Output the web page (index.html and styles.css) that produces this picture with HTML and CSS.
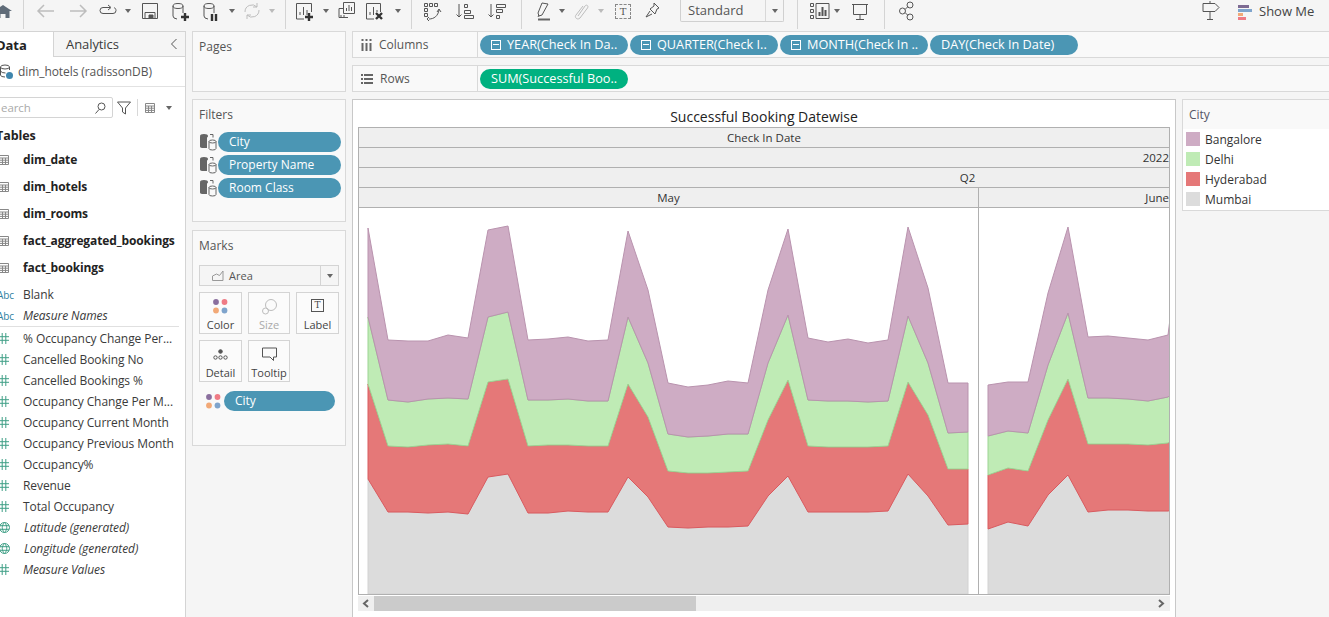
FILE: index.html
```html
<!DOCTYPE html>
<html lang="en">
<head>
    <meta charset="UTF-8">
    <meta name="viewport" content="width=device-width, initial-scale=1.0">
    <link rel="stylesheet" href="styles.css">
    <title>Successful Booking Datewise</title>
</head>
<body>

    <svg class="defs" width="0" height="0">
        <symbol id="tableIcon" viewBox="0 0 10 10">
            <path d="M.5.5h9v9h-9zM.5 3h9M.5 5.2h9M.5 7.4h9M3.5 3v6.5M6.5 3v6.5" fill="none" stroke="#888"/>
        </symbol>
        <symbol id="hashIcon" viewBox="0 0 10 11">
            <path d="M3.2 0v11M6.8 0v11M0 3.700h10M0 7.300h10" fill="none" stroke="#3f9f86"/>
        </symbol>
        <symbol id="globeIcon" viewBox="0 0 11 11">
            <path d="M5.500.5a5 5 0 1 0 0 10a5 5 0 1 0 0-10M5.500.5c-3 3-3 7 0 10c3-3 3-7 0-10M1 3.700h9M1 7.300h9" fill="none" stroke="#3f9f86"/>
        </symbol>
        <symbol id="shelfDsIcon" viewBox="0 0 18 18">
            <path d="M1 3.500v10q0 1.500 4 1.500h3V3.500z" fill="#666"/>
            <ellipse cx="5" cy="3" rx="4" ry="2" fill="#666"/>
            <path d="M10 8.500v7q0 1.500 3.500 1.500t3.500-1.500v-7M10 8.500q0-1.500 3.500-1.500t3.500 1.500q0 1.500-3.500 1.500t-3.500-1.500M11 1.500h3v3" fill="none" stroke="#666"/>
        </symbol>
        <symbol id="colorDots" viewBox="0 0 15 15">
            <circle cx="3" cy="3" r="2.900" fill="#8a6f9e"/>
            <circle cx="11.500" cy="3" r="2.900" fill="#ef7b85"/>
            <circle cx="3" cy="11.500" r="2.900" fill="#f2a977"/>
            <circle cx="11.500" cy="11.500" r="2.900" fill="#7fa4cc"/>
        </symbol>
    </svg>

    <header class="toolbar">
        <svg class="ic" width="22" height="22" viewBox="0 0 22 22"><path d="M11 5l9 6h-2.500v7h-4v-4h-5v4h-4v-7H2z" fill="#5f6b78" stroke="none"/></svg>
        <i class="sep"></i>
        <svg class="ic off" width="18" height="22" viewBox="0 0 18 22"><path d="M1 11h16M7 5l-6 6 6 6" stroke-width="1.500"/></svg>
        <svg class="ic off" width="18" height="22" viewBox="0 0 18 22"><path d="M1 11h16M11 5l6 6-6 6" stroke-width="1.500"/></svg>
        <svg class="ic" width="20" height="22" viewBox="0 0 20 22"><path d="M12 7.500H5a3 3 0 0 0 0 6h10a3 3 0 0 0 3-3c0-1.500-1-2.500-2-3M10 5l3 2.500-3 2.500"/></svg>
        <i class="caret"></i>
        <svg class="ic" width="18" height="22" viewBox="0 0 18 22"><path d="M1.500 3.500h15v15h-15zM4 18.500v-6h10v6"/><path d="M8 15h4v3.500H8z" fill="#555"/></svg>
        <svg class="ic" width="20" height="22" viewBox="0 0 20 22"><ellipse cx="7" cy="6" rx="5" ry="2.500"/><path d="M2 6v10q0 2.500 4 3M12 6v7"/><path class="heavy" d="M14 13v8M10 17h8"/></svg>
        <svg class="ic" width="20" height="22" viewBox="0 0 20 22"><ellipse cx="7" cy="6" rx="5" ry="2.500"/><path d="M2 6v10q0 2.500 4 3M12 6v7"/><path class="heavy" d="M10 14v7M14 14v7"/></svg>
        <i class="caret"></i>
        <svg class="ic off" width="18" height="22" viewBox="0 0 18 22"><path d="M2 12a7 7 0 0 1 12-5M16 10a7 7 0 0 1-12 5M14 3v4h-4M4 19v-4h4"/></svg>
        <i class="caret off"></i>
        <i class="sep"></i>
        <svg class="ic" width="20" height="22" viewBox="0 0 20 22"><path d="M9 19H1.500V3.500h15V12M5 15v-3M8.500 15V7M12 15v-5" /><path class="heavy" d="M14 13v8M10 17h8"/></svg>
        <i class="caret"></i>
        <svg class="ic" width="18" height="22" viewBox="0 0 18 22"><path d="M1 8.500h5M1 8.500v9h9M5.500 2.500h11v11h-11zM8.500 11V8M11 11V5M13.500 11V7M3 17v-2M6 17v-2"/></svg>
        <svg class="ic" width="20" height="22" viewBox="0 0 20 22"><path d="M9 19H1.500V3.500h14V12M5 15v-3M8.500 15V7M12 12v-2"/><path class="heavy" d="M11 13l6 6M17 13l-6 6"/></svg>
        <i class="caret"></i>
        <i class="sep"></i>
        <svg class="ic" width="18" height="22" viewBox="0 0 18 22"><path d="M1.500 3.500h3v3h-3zM6.500 3.500h3v3h-3zM11.500 3.500h3v3h-3zM1.500 8.500h3v3h-3zM1.500 13.500h3v3h-3zM6 19c5 0 9-3 10-9M14 12l2-3 2 3M6 17l-2 2 2 2"/></svg>
        <svg class="ic" width="18" height="22" viewBox="0 0 18 22"><path d="M3 4v13M.5 14.500L3 17l2.500-2.500M8.500 4.500h3v3h-3zM8.500 10.500h6v3h-6zM8.500 15.500h9v3h-9z"/></svg>
        <svg class="ic" width="18" height="22" viewBox="0 0 18 22"><path d="M3 4v13M.5 14.500L3 17l2.500-2.500M8.500 4.500h9v3h-9zM8.500 9.500h6v3h-6zM8.500 15.500h3v3h-3z"/></svg>
        <i class="sep"></i>
        <svg class="ic" width="14" height="22" viewBox="0 0 14 22"><path d="M5 3L1 13l1 3 3-1 6-11zM2 15l-1 2"/><path d="M1 19.500h12" stroke="#666" stroke-width="2"/></svg>
        <i class="caret"></i>
        <svg class="ic off" width="14" height="22" viewBox="0 0 14 22"><path d="M4 16l7-10c1.500-2 4 0 2.500 2L6 18c-2.500 2.500-6-.5-4-3l7-9"/></svg>
        <i class="caret off"></i>
        <span class="tbox">T</span>
        <svg class="ic" width="16" height="22" viewBox="0 0 16 22"><path d="M9 3l5 5-2 1-2 5-5-5 4-3zM5 11l-4 6 6-3"/></svg>
        <div class="select">
            <span class="select-text">Standard</span>
            <span class="select-arrow"><i class="caret"></i></span>
        </div>
        <i class="sep"></i>
        <svg class="ic" width="20" height="22" viewBox="0 0 20 22"><path d="M.5 3.500h3v3h-3zM.5 9.500h3v3h-3zM.5 15.500h3v3h-3zM6 3.500h13v15H6z"/><path class="mid" d="M9.500 16v-4M12.500 16V7M15.500 16v-6"/></svg>
        <i class="caret"></i>
        <svg class="ic" width="16" height="22" viewBox="0 0 16 22"><path d="M0 4.500h16M1.500 4.500v10h13v-10M8 14.500v5M4 19.500h8"/></svg>
        <i class="sep"></i>
        <svg class="ic" width="15" height="22" viewBox="0 0 15 22"><circle cx="3.500" cy="11" r="3"/><circle cx="11" cy="5" r="3"/><circle cx="11" cy="17" r="3"/><path d="M6 9.500l3-3M6 12.500l3 3"/></svg>
        <span></span>
        <svg class="ic" width="18" height="22" viewBox="0 0 18 22"><path d="M1 3.500h12l4 4-4 4H1zM8 3.500V1M8 11.500V19M5 19.500h6"/></svg>
        <div class="show-me">
            <svg width="14" height="18" viewBox="0 0 14 18"><path d="M0 3h11v3H0z" fill="#7d6a92"/><path d="M0 7h14v3H0z" fill="#7fa4cc"/><path d="M0 11h5v3H0z" fill="#f2a977"/><path d="M0 15h8v3H0z" fill="#ef7b85"/></svg>
            <span>Show Me</span>
        </div>
    </header>

    <div class="workspace">
        <aside class="data-pane">
            <div class="tabs">
                <div class="tab tab-active"><span>Data</span></div>
                <div class="tab tab-other">
                    <span>Analytics</span>
                    <svg class="ic" width="8" height="12" viewBox="0 0 8 12"><path d="M6.500 1L1.500 6l5 5"/></svg>
                </div>
            </div>
            <div class="source">
                <svg class="ic thin" width="14" height="16" viewBox="0 0 14 16"><ellipse cx="5" cy="3" rx="4.500" ry="2"/><path d="M.5 3v8q0 2 4.500 2M9.500 3v3M.5 7q1 2 5 2"/><circle cx="9.500" cy="11.500" r="3.500" fill="#3f86ad" stroke="none"/></svg>
                <span>dim_hotels (radissonDB)</span>
            </div>
            <div class="search-row">
                <div class="search">
                    <span class="search-text">earch</span>
                    <svg class="ic" width="11" height="12" viewBox="0 0 11 12"><circle cx="6.500" cy="4.500" r="3.500"/><path d="M4 7.500l-3.500 4"/></svg>
                </div>
                <svg class="ic" width="14" height="14" viewBox="0 0 14 14"><path d="M.5 1h13L8.500 7v6l-3-2V7z"/></svg>
                <i class="search-sep"></i>
                <svg class="view-icon" width="12" height="10"><use href="#tableIcon"/></svg>
                <i class="caret"></i>
            </div>
            <h3 class="tables-title">Tables</h3>
            <ul class="field-list tables">
                <li><svg width="10" height="10"><use href="#tableIcon"/></svg><span>dim_date</span></li>
                <li><svg width="10" height="10"><use href="#tableIcon"/></svg><span>dim_hotels</span></li>
                <li><svg width="10" height="10"><use href="#tableIcon"/></svg><span>dim_rooms</span></li>
                <li><svg width="10" height="10"><use href="#tableIcon"/></svg><span>fact_aggregated_bookings</span></li>
                <li><svg width="10" height="10"><use href="#tableIcon"/></svg><span>fact_bookings</span></li>
            </ul>
            <ul class="field-list dimensions">
                <li><b class="abc">Abc</b><span>Blank</span></li>
                <li><b class="abc">Abc</b><span class="gen">Measure Names</span></li>
            </ul>
            <ul class="field-list measures">
                <li><svg width="10" height="11"><use href="#hashIcon"/></svg><span>% Occupancy Change Per...</span></li>
                <li><svg width="10" height="11"><use href="#hashIcon"/></svg><span>Cancelled Booking No</span></li>
                <li><svg width="10" height="11"><use href="#hashIcon"/></svg><span>Cancelled Bookings %</span></li>
                <li><svg width="10" height="11"><use href="#hashIcon"/></svg><span>Occupancy Change Per M...</span></li>
                <li><svg width="10" height="11"><use href="#hashIcon"/></svg><span>Occupancy Current Month</span></li>
                <li><svg width="10" height="11"><use href="#hashIcon"/></svg><span>Occupancy Previous Month</span></li>
                <li><svg width="10" height="11"><use href="#hashIcon"/></svg><span>Occupancy%</span></li>
                <li><svg width="10" height="11"><use href="#hashIcon"/></svg><span>Revenue</span></li>
                <li><svg width="10" height="11"><use href="#hashIcon"/></svg><span>Total Occupancy</span></li>
                <li><svg width="11" height="11"><use href="#globeIcon"/></svg><span class="gen">Latitude (generated)</span></li>
                <li><svg width="11" height="11"><use href="#globeIcon"/></svg><span class="gen">Longitude (generated)</span></li>
                <li><svg width="10" height="11"><use href="#hashIcon"/></svg><span class="gen">Measure Values</span></li>
            </ul>
        </aside>

        <section class="cards">
            <div class="card card-pages"><h4>Pages</h4></div>
            <div class="card card-filters">
                <h4>Filters</h4>
                <div class="filter"><svg width="18" height="18"><use href="#shelfDsIcon"/></svg><span class="pill">City</span></div>
                <div class="filter"><svg width="18" height="18"><use href="#shelfDsIcon"/></svg><span class="pill">Property Name</span></div>
                <div class="filter"><svg width="18" height="18"><use href="#shelfDsIcon"/></svg><span class="pill">Room Class</span></div>
            </div>
            <div class="card card-marks">
                <h4>Marks</h4>
                <div class="marks-type">
                    <span class="marks-name">
                        <svg class="ic light" width="12" height="11" viewBox="0 0 12 11"><path d="M.5 10.500V6l4-2 3 1.500L11 1v9.500z"/></svg>
                        Area
                    </span>
                    <span class="marks-arrow"><i class="caret"></i></span>
                </div>
                <div class="marks-grid">
                    <div class="mark-btn">
                        <svg width="15" height="15"><use href="#colorDots"/></svg>
                        <span>Color</span>
                    </div>
                    <div class="mark-btn mark-off">
                        <svg class="ic off" width="15" height="15" viewBox="0 0 15 15"><circle cx="9" cy="6" r="5.500"/><circle cx="3.500" cy="12" r="3"/></svg>
                        <span>Size</span>
                    </div>
                    <div class="mark-btn">
                        <span class="label-t">T</span>
                        <span>Label</span>
                    </div>
                    <div class="mark-btn">
                        <svg class="ic thin" width="15" height="15" viewBox="0 0 15 15"><circle cx="7.500" cy="4.500" r="1.800" fill="#555"/><circle cx="2.500" cy="10.500" r="1.700"/><circle cx="7.500" cy="10.500" r="1.700"/><circle cx="12.500" cy="10.500" r="1.700"/></svg>
                        <span>Detail</span>
                    </div>
                    <div class="mark-btn">
                        <svg class="ic" width="15" height="15" viewBox="0 0 15 15"><path d="M.5 1h14v9h-3v3.500L8 10H.5z"/></svg>
                        <span>Tooltip</span>
                    </div>
                </div>
                <div class="marks-field">
                    <svg width="15" height="15"><use href="#colorDots"/></svg>
                    <span class="pill">City</span>
                </div>
            </div>
        </section>

        <main class="main">
            <div class="shelf">
                <div class="shelf-label">
                    <svg class="ic heavyline" width="11" height="12" viewBox="0 0 11 12"><path d="M1.500 4v8M5.500 4v8M9.500 4v8M1.500 0v2M5.500 0v2M9.500 0v2"/></svg>
                    <span>Columns</span>
                </div>
                <div class="shelf-pills">
                    <span class="pill pill-wide"><i class="minus"></i>YEAR(Check In Da..</span>
                    <span class="pill pill-wide"><i class="minus"></i>QUARTER(Check I..</span>
                    <span class="pill pill-wide"><i class="minus"></i>MONTH(Check In ..</span>
                    <span class="pill pill-wide">DAY(Check In Date)</span>
                </div>
            </div>
            <div class="shelf">
                <div class="shelf-label">
                    <svg class="ic heavyline" width="12" height="10" viewBox="0 0 12 10"><path d="M0 1h2M3 1h9M0 5h2M3 5h9M0 9h2M3 9h9"/></svg>
                    <span>Rows</span>
                </div>
                <div class="shelf-pills">
                    <span class="pill pill-wide pill-green">SUM(Successful Boo..</span>
                </div>
            </div>

            <div class="view">
                <div class="sheet">
                    <div class="sheet-title">Successful Booking Datewise</div>
                    <div class="crosstab">
                        <div class="head-row head-center">Check In Date</div>
                        <div class="head-row head-right">2022</div>
                        <div class="head-row head-quarter">Q2</div>
                        <div class="head-row head-months">
                            <div class="month-may">May</div>
                            <div class="month-june">June</div>
                        </div>
                        <svg id="areaChart" class="plot" width="810" height="386" viewBox="359 208 810 386"></svg>
                    </div>
                    <div class="scrollbar">
                        <svg class="ic heavyline" width="8" height="9" viewBox="0 0 8 9"><path d="M6 1L2 4.500 6 8"/></svg>
                        <div class="scroll-track"><div class="scroll-thumb"></div></div>
                        <svg class="ic heavyline" width="8" height="9" viewBox="0 0 8 9"><path d="M2 1l4 3.500L2 8"/></svg>
                    </div>
                </div>
                <div class="legend">
                    <div class="legend-title">City</div>
                    <div class="legend-item"><i class="swatch swatch-bangalore"></i>Bangalore</div>
                    <div class="legend-item"><i class="swatch swatch-delhi"></i>Delhi</div>
                    <div class="legend-item"><i class="swatch swatch-hyderabad"></i>Hyderabad</div>
                    <div class="legend-item"><i class="swatch swatch-mumbai"></i>Mumbai</div>
                </div>
            </div>
        </main>
    </div>

    <script src="chart.js"></script>
</body>
</html>
```

FILE: styles.css
```css
* {
    box-sizing: border-box;
}

html, body {
    height: 617px;
    overflow: hidden;
}

body {
    margin: 0;
    background-color: #f5f5f5;
    font-family: "Open Sans", Arial, sans-serif;
    font-size: 12px;
    color: #3a3a3a;
}

.defs {
    position: absolute;
}

i {
    display: block;
}

h3, h4, ul {
    margin: 0;
    padding: 0;
}

/* line icons */
.ic {
    fill: none;
    stroke: #555;
    stroke-width: 1;
    overflow: visible;
}

.ic.off {
    stroke: #bdbdbd;
}

.ic.light {
    stroke: #999;
}

.ic.heavyline {
    stroke: #666;
    stroke-width: 2;
}

.heavy {
    stroke: #333;
    stroke-width: 2.4;
}

.mid {
    stroke-width: 2;
}

.caret {
    width: 0;
    height: 0;
    border-left: 3.5px solid transparent;
    border-right: 3.5px solid transparent;
    border-top: 4px solid #666;
}

.caret.off {
    border-top-color: #bbb;
}

/* toolbar */
.toolbar {
    display: grid;
    grid-template-columns: 22px 18px 28px 36px 24px 16px 28px 34px 28px 12px 28px 12px 14px 26px 16px 26px 30px 16px 10px 32px 34px 30px 18px 28px 8px 30px 10px 34px 26px 118px 26px 20px 14px 32px 16px 28px 1fr 30px 103px;
    grid-template-rows: 22px;
    justify-items: center;
    align-items: center;
    width: 1337px;
    height: 31px;
    margin-left: -8px;
}

.sep {
    width: 1px;
    height: 29px;
    background-color: #d4d4d4;
    align-self: start;
}

.tbox {
    width: 16px;
    height: 15px;
    border: 1px dashed #888;
    font-family: "DejaVu Serif", serif;
    font-size: 10px;
    line-height: 13px;
    text-align: center;
    color: #555;
}

.select {
    display: flex;
    justify-self: end;
    width: 104px;
    height: 22px;
    align-self: start;
    border: 1px solid #d0d0d0;
    border-top: none;
    border-radius: 0 0 2px 2px;
    font-size: 13px;
    color: #555;
}

.select-text {
    flex: 1;
    padding-left: 7px;
    line-height: 21px;
}

.select-arrow {
    display: flex;
    align-items: center;
    justify-content: center;
    width: 18px;
    border-left: 1px solid #d8d8d8;
}

.show-me {
    display: flex;
    align-items: center;
    justify-self: start;
    gap: 7px;
    margin-left: 12px;
    font-size: 13px;
    color: #444;
}

/* layout */
.workspace {
    display: flex;
    height: 586px;
}

/* data pane */
.data-pane {
    flex: none;
    width: 186px;
    overflow: hidden;
    background-color: #fff;
    border-top: 1px solid #d4d4d4;
    border-right: 1px solid #d4d4d4;
    letter-spacing: -0.08px;
}

.tabs {
    display: flex;
    height: 25px;
    font-size: 13px;
}

.tab {
    display: flex;
    align-items: center;
}

.tab-active {
    width: 54px;
    border-right: 1px solid #d4d4d4;
    font-weight: 700;
    color: #222;
}

.tab-active span {
    margin-left: -4px;
}

.tab-other {
    flex: 1;
    justify-content: space-between;
    padding: 0 7px 0 12px;
    background-color: #f5f5f5;
    border-bottom: 1px solid #d4d4d4;
}

.source {
    display: flex;
    align-items: center;
    gap: 4px;
    height: 30px;
    border-bottom: 1px solid #e2e2e2;
    color: #555;
}

.search-row {
    display: flex;
    align-items: center;
    height: 21px;
    margin-top: 10px;
}

.search {
    display: flex;
    align-items: center;
    justify-content: space-between;
    flex: none;
    width: 117px;
    height: 21px;
    margin-left: -4px;
    padding: 0 6px 0 4px;
    border: 1px solid #d4d4d4;
    border-radius: 2px;
    color: #aaa;
    font-size: 11.5px;
}

.search-row > .ic {
    margin-left: 4px;
}

.search-sep {
    width: 1px;
    height: 17px;
    margin: 0 6px;
    background-color: #d8d8d8;
}

.view-icon {
    margin-right: 10px;
}

.tables-title {
    height: 18px;
    margin: 9px 0 1px -4px;
    font-size: 12.5px;
    font-weight: 700;
    line-height: 18px;
    color: #222;
}

.field-list {
    list-style: none;
}

.field-list li {
    display: flex;
    align-items: center;
    height: 21px;
    white-space: nowrap;
}

.field-list svg {
    flex: none;
    margin-left: -1px;
    margin-right: 14px;
}

.tables li {
    height: 27px;
    font-weight: 700;
    letter-spacing: -0.12px;
    color: #222;
}

.dimensions {
    margin-top: 3px;
}

.measures {
    margin-right: 6px;
    border-top: 1px solid #e0e0e0;
    padding-top: 1px;
}

.abc {
    flex: none;
    width: 23px;
    margin-left: -3px;
    margin-right: 3px;
    font-size: 10px;
    font-weight: 400;
    color: #2f7f9f;
}

.gen {
    font-style: italic;
}

/* pages / filters / marks */
.cards {
    flex: none;
    display: flex;
    flex-direction: column;
    width: 154px;
    margin-left: 6px;
}

.card {
    background-color: #f9f9f9;
    border: 1px solid #d9d9d9;
    padding: 6px 6px 0;
}

.card h4 {
    font-size: 12px;
    font-weight: 400;
    line-height: 17px;
    color: #555;
}

.card-pages {
    height: 61px;
}

.card-filters {
    height: 123px;
    margin-top: 7px;
}

.card-marks {
    height: 216px;
    margin-top: 8px;
}

.pill {
    display: block;
    flex: none;
    height: 20px;
    padding-left: 11px;
    border-radius: 10px;
    background-color: #4b96b4;
    color: #fff;
    line-height: 19px;
    white-space: nowrap;
    overflow: hidden;
}

.filter {
    display: flex;
    align-items: center;
    gap: 1px;
    margin-bottom: 3px;
}

.filter:first-of-type {
    margin-top: 9px;
}

.filter svg {
    flex: none;
}

.filter .pill {
    width: 123px;
}

.marks-type {
    display: flex;
    height: 21px;
    margin-top: 11px;
    background-color: #f5f5f5;
    border: 1px solid #d4d4d4;
    font-size: 11px;
    color: #555;
}

.marks-name {
    display: flex;
    align-items: center;
    gap: 5px;
    flex: 1;
    padding-left: 12px;
}

.marks-arrow {
    display: flex;
    align-items: center;
    justify-content: center;
    width: 18px;
    border-left: 1px solid #d4d4d4;
}

.marks-grid {
    display: grid;
    grid-template-columns: 43px 42px 43px;
    gap: 6px;
    margin-top: 6px;
}

.mark-btn {
    display: flex;
    flex-direction: column;
    align-items: center;
    justify-content: space-between;
    height: 42px;
    padding: 6px 0 1px;
    background-color: #fbfbfb;
    border: 1px solid #d4d4d4;
    font-size: 11px;
    color: #444;
}

.mark-off {
    color: #aaa;
}

.label-t {
    width: 13px;
    height: 13px;
    border: 1px solid #555;
    font-family: "DejaVu Serif", serif;
    font-size: 9px;
    line-height: 11px;
    text-align: center;
}

.marks-field {
    display: flex;
    align-items: center;
    gap: 3px;
    margin-top: 9px;
    margin-left: 7px;
}

.marks-field svg {
    flex: none;
}

.marks-field .pill {
    width: 111px;
}

/* columns / rows shelves */
.main {
    flex: 1;
    margin-left: 6px;
    min-width: 0;
}

.shelf {
    display: flex;
    height: 27px;
    margin-bottom: 7px;
    background-color: #f9f9f9;
    border: 1px solid #d9d9d9;
    border-right: none;
}

.shelf-label {
    display: flex;
    align-items: center;
    gap: 7px;
    width: 125px;
    padding-left: 8px;
    border-right: 1px solid #d9d9d9;
    color: #555;
}

.shelf-pills {
    display: flex;
    align-items: center;
    gap: 2px;
    padding-left: 2px;
}

.pill-wide {
    width: 148px;
    padding-left: 11px;
    font-size: 12.7px;
}

.minus {
    display: inline-block;
    width: 10px;
    height: 10px;
    margin-right: 6px;
    border: 1px solid #fff;
    vertical-align: -1px;
    background: linear-gradient(#fff, #fff) center / 6px 1px no-repeat;
}

.pill-green {
    background-color: #00b180;
}

/* view */
.view {
    display: flex;
    margin-top: 7px;
}

.sheet {
    flex: none;
    width: 824px;
    height: 530px;
    padding: 0 5px;
    background-color: #fff;
    border: 1px solid #c8c8c8;
}

.sheet-title {
    height: 27px;
    padding-top: 7px;
    font-size: 14px;
    line-height: 20px;
    text-align: center;
    color: #222;
}

.crosstab {
    width: 812px;
    border: 1px solid #b0b0b0;
    border-top: none;
}

.head-row {
    height: 20px;
    padding: 0 1px;
    background-color: #efefef;
    border-top: 1px solid #b0b0b0;
    font-size: 11.5px;
    line-height: 19px;
    color: #333;
}

.head-center {
    text-align: center;
}

.head-right {
    text-align: right;
    padding-right: 0;
}

.head-quarter {
    padding-left: 408px;
    text-align: center;
}

.head-months {
    display: flex;
    height: 21px;
    padding: 0;
    border-bottom: 1px solid #b0b0b0;
}

.month-may {
    width: 619px;
    text-align: center;
}

.month-june {
    flex: 1;
    text-align: right;
    border-left: 1px solid #b0b0b0;
}

.plot {
    display: block;
}

.scrollbar {
    display: flex;
    align-items: center;
    width: 812px;
    height: 15px;
    margin-top: 1px;
    padding: 0 5px 0 4px;
    gap: 4px;
    background-color: #efefef;
}

.scroll-track {
    flex: 1;
    height: 15px;
}

.scroll-thumb {
    width: 322px;
    height: 15px;
    background-color: #cbcbcb;
}

/* legend */
.legend {
    flex: none;
    width: 150px;
    height: 112px;
    margin-left: 6px;
    background-color: #fff;
    border: 1px solid #d9d9d9;
}

.legend-title {
    height: 29px;
    padding: 7px 0 0 6px;
    background-color: #f9f9f9;
    color: #556;
    line-height: 16px;
}

.legend-item {
    display: flex;
    align-items: center;
    gap: 5px;
    height: 20px;
    padding-left: 3px;
    color: #333;
}

.swatch {
    width: 14px;
    height: 14px;
}

.swatch-bangalore { background-color: #ceacc4; }
.swatch-delhi { background-color: #bfebb5; }
.swatch-hyderabad { background-color: #e57878; }
.swatch-mumbai { background-color: #dcdcdc; }
```

FILE: chart.js
```js
// y pixel of each stacked boundary, one point per day, 20px apart
var BASE = 594;

var may = {
    start: 368,
    top: [228,340,341,341,335,338,230,226,340,339,337,341,340,231,290,383,387,385,381,383,290,229,338,342,339,343,340,227,288,383,383],
    b1: [317,400,402,399,398,399,317,312,400,400,399,401,401,317,363,434,437,436,434,434,363,315,400,401,401,402,401,316,363,433,432],
    b2: [384,446,447,445,444,446,382,379,446,445,445,446,446,384,417,471,473,473,472,471,420,380,446,447,447,447,446,382,415,469,469],
    b3: [479,512,512,513,512,514,477,474,513,513,511,512,512,477,497,527,528,527,527,526,496,476,512,512,512,512,511,474,496,525,524]
};

var june = {
    start: 988,
    top: [385,382,382,293,227,337,336,338,340,335,175],
    b1: [436,431,433,365,313,398,398,399,401,397,380],
    b2: [475,468,471,420,379,444,444,444,445,443,430],
    b3: [529,522,526,495,475,512,510,510,511,511,505]
};

var bands = [
    { upper: "b3", lower: null, fill: "#dcdcdc", line: "#d2d2d2" },
    { upper: "b2", lower: "b3", fill: "#e57878", line: "#d95a5f" },
    { upper: "b1", lower: "b2", fill: "#bfebb5", line: "#9cd493" },
    { upper: "top", lower: "b1", fill: "#ceacc4", line: "#b993ae" }
];

function points(part, key) {
    return part[key].map(function (y, i) {
        return (part.start + i * 20) + "," + y;
    });
}

function drawBand(svg, part, band) {
    var upper = points(part, band.upper);
    var lastX = part.start + (part.top.length - 1) * 20;
    var lower = band.lower
        ? points(part, band.lower).reverse()
        : [lastX + "," + BASE, part.start + "," + BASE];

    var poly = document.createElementNS("http://www.w3.org/2000/svg", "polygon");
    poly.setAttribute("points", upper.concat(lower).join(" "));
    poly.setAttribute("fill", band.fill);
    poly.setAttribute("stroke", band.line);
    svg.appendChild(poly);
}

var svg = document.getElementById("areaChart");

[may, june].forEach(function (part) {
    bands.forEach(function (band) {
        drawBand(svg, part, band);
    });
});

// divider between May and June
var divider = document.createElementNS("http://www.w3.org/2000/svg", "line");
divider.setAttribute("x1", "978.5");
divider.setAttribute("x2", "978.5");
divider.setAttribute("y1", "208");
divider.setAttribute("y2", "594");
divider.setAttribute("stroke", "#b0b0b0");
svg.appendChild(divider);
```
